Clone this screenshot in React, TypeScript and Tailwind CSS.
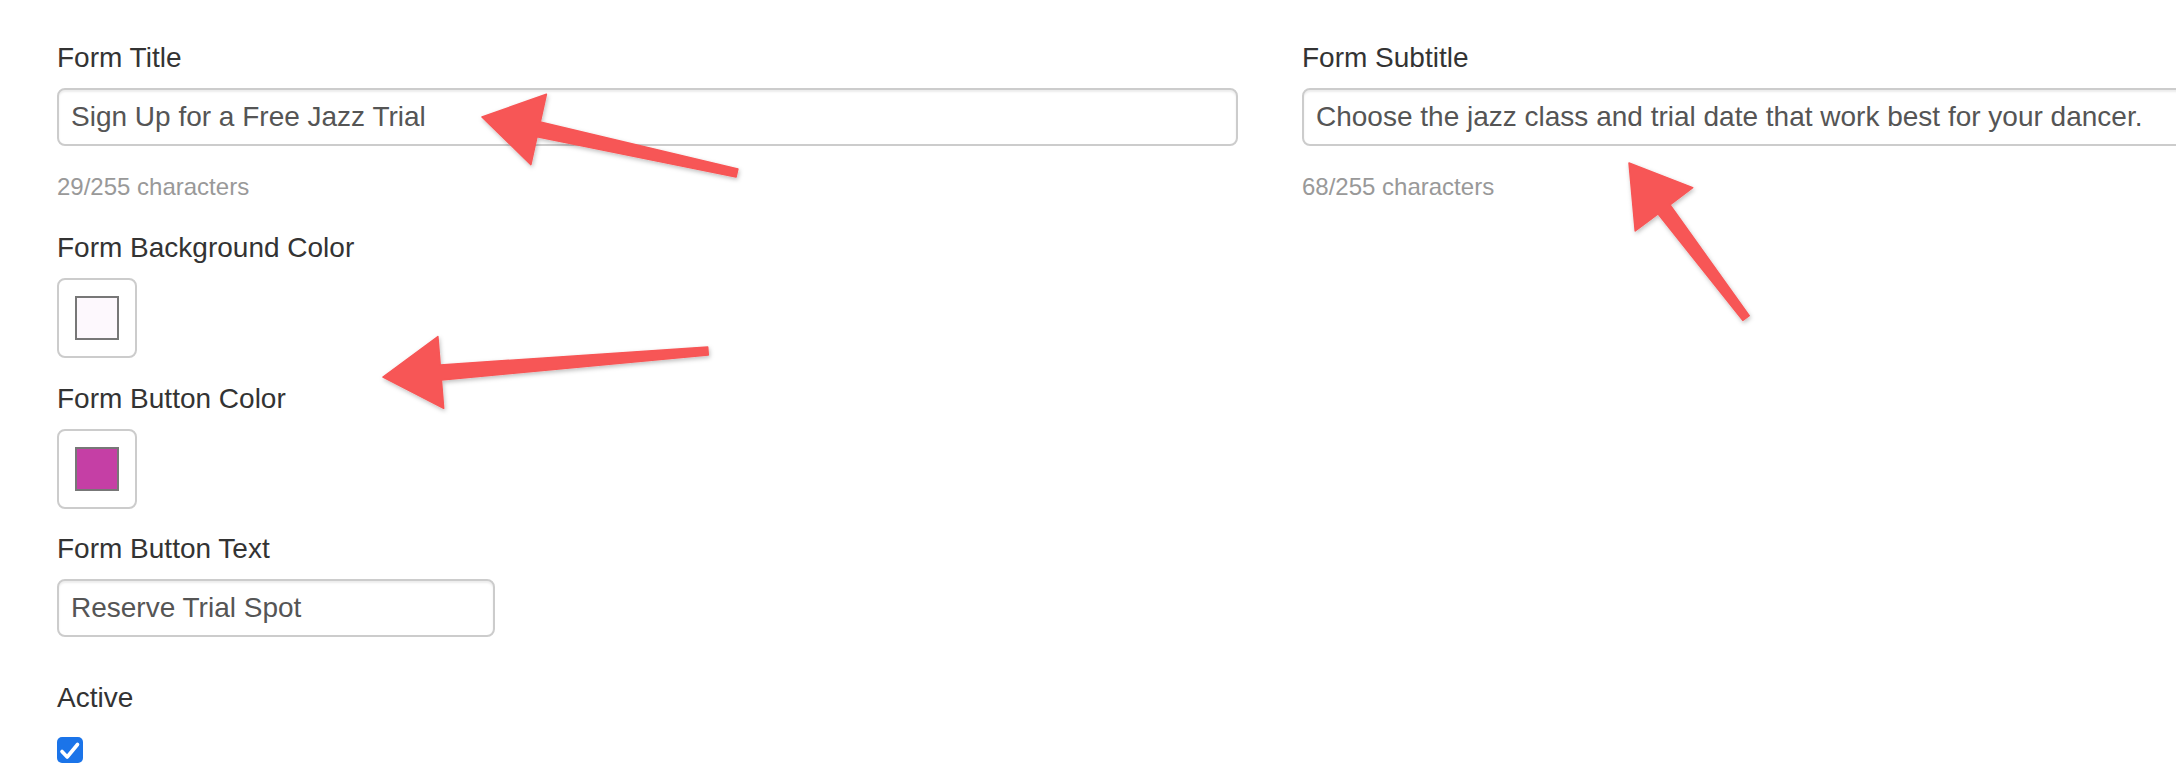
import React from "react";

type Pt = [number, number];

// Callout arrow as one polygon: triangular head at `tip`, tapered shaft back to `tail`.
function arrowPoints(tip: Pt, tail: Pt, headLen = 58, headHalf = 36, neckHalf = 7.5, tailHalf = 4) {
  const dx = tail[0] - tip[0];
  const dy = tail[1] - tip[1];
  const len = Math.hypot(dx, dy);
  const ux = dx / len;
  const uy = dy / len;
  const nx = -uy;
  const ny = ux;
  const bx = tip[0] + ux * headLen;
  const by = tip[1] + uy * headLen;
  const pts: Pt[] = [
    tip,
    [bx + nx * headHalf, by + ny * headHalf],
    [bx + nx * neckHalf, by + ny * neckHalf],
    [tail[0] + nx * tailHalf, tail[1] + ny * tailHalf],
    [tail[0] - nx * tailHalf, tail[1] - ny * tailHalf],
    [bx - nx * neckHalf, by - ny * neckHalf],
    [bx - nx * headHalf, by - ny * headHalf],
  ];
  return pts.map((p) => `${p[0].toFixed(1)},${p[1].toFixed(1)}`).join(" ");
}

const arrows: { tip: Pt; tail: Pt }[] = [
  { tip: [482, 117], tail: [737, 173] },
  { tip: [1629, 163], tail: [1746, 318] },
  { tip: [383, 377], tail: [708, 351] },
];

function Label({ children }: { children: React.ReactNode }) {
  return <div className="text-[28px] leading-[40px] text-[#333]">{children}</div>;
}

function TextField({ value, className }: { value: string; className: string }) {
  return (
    <div
      className={`mt-[10px] h-[58px] flex items-center rounded-[8px] border-2 border-[#ccc] px-[12px] text-[28px] text-[#555] shadow-[inset_0_2px_2px_rgba(0,0,0,0.075)] whitespace-nowrap overflow-hidden ${className}`}
    >
      {value}
    </div>
  );
}

function CharCount({ used }: { used: number }) {
  return <div className="mt-[24px] text-[24px] leading-[34px] text-[#999]">{used}/255 characters</div>;
}

function Swatch({ color }: { color: string }) {
  return (
    <div className="mt-[10px] w-[80px] h-[80px] rounded-[8px] border-2 border-[#ccc] flex items-center justify-center">
      <div className={`w-[44px] h-[44px] border-2 border-[#777] ${color}`} />
    </div>
  );
}

export default function App() {
  return (
    <div className="relative w-[2176px] h-[772px] overflow-hidden bg-white font-['Liberation_Sans',Arial,sans-serif]">
      <div className="pl-[57px] pt-[38px]">
        <div className="flex gap-[64px] w-[2426px]">
          <div className="w-[1181px] shrink-0">
            <Label>Form Title</Label>
            <TextField value="Sign Up for a Free Jazz Trial" className="w-full" />
            <CharCount used={29} />
          </div>
          <div className="w-[1181px] shrink-0">
            <Label>Form Subtitle</Label>
            <TextField
              value="Choose the jazz class and trial date that work best for your dancer."
              className="w-full"
            />
            <CharCount used={68} />
          </div>
        </div>

        <div className="mt-[24px]">
          <Label>Form Background Color</Label>
          <Swatch color="bg-[#fdf8fd]" />
        </div>

        <div className="mt-[21px]">
          <Label>Form Button Color</Label>
          <Swatch color="bg-[#c53fa5]" />
        </div>

        <div className="mt-[20px]">
          <Label>Form Button Text</Label>
          <TextField value="Reserve Trial Spot" className="w-[438px]" />
        </div>

        <div className="mt-[41px]">
          <Label>Active</Label>
          <div className="mt-[19px] w-[26px] h-[26px] rounded-[5px] bg-[#1b74e9] flex items-center justify-center">
            <svg width="26" height="26" viewBox="0 0 26 26" fill="none">
              <path
                d="M5 14.5 L10.2 20 L20.5 7.5"
                stroke="white"
                strokeWidth="3.6"
                strokeLinecap="round"
                strokeLinejoin="round"
              />
            </svg>
          </div>
        </div>
      </div>

      {/* annotation arrows */}
      <svg
        className="absolute inset-0 pointer-events-none"
        width="2176"
        height="772"
        viewBox="0 0 2176 772"
      >
        <defs>
          <filter id="arrowShadow" x="-10%" y="-10%" width="120%" height="120%">
            <feDropShadow dx="1" dy="2" stdDeviation="2" floodColor="#000" floodOpacity="0.25" />
          </filter>
        </defs>
        {arrows.map((a, i) => (
          <polygon
            key={i}
            points={arrowPoints(a.tip, a.tail)}
            fill="#f75656"
            stroke="#f75656"
            strokeWidth="1.5"
            strokeLinejoin="round"
            filter="url(#arrowShadow)"
          />
        ))}
      </svg>
    </div>
  );
}
